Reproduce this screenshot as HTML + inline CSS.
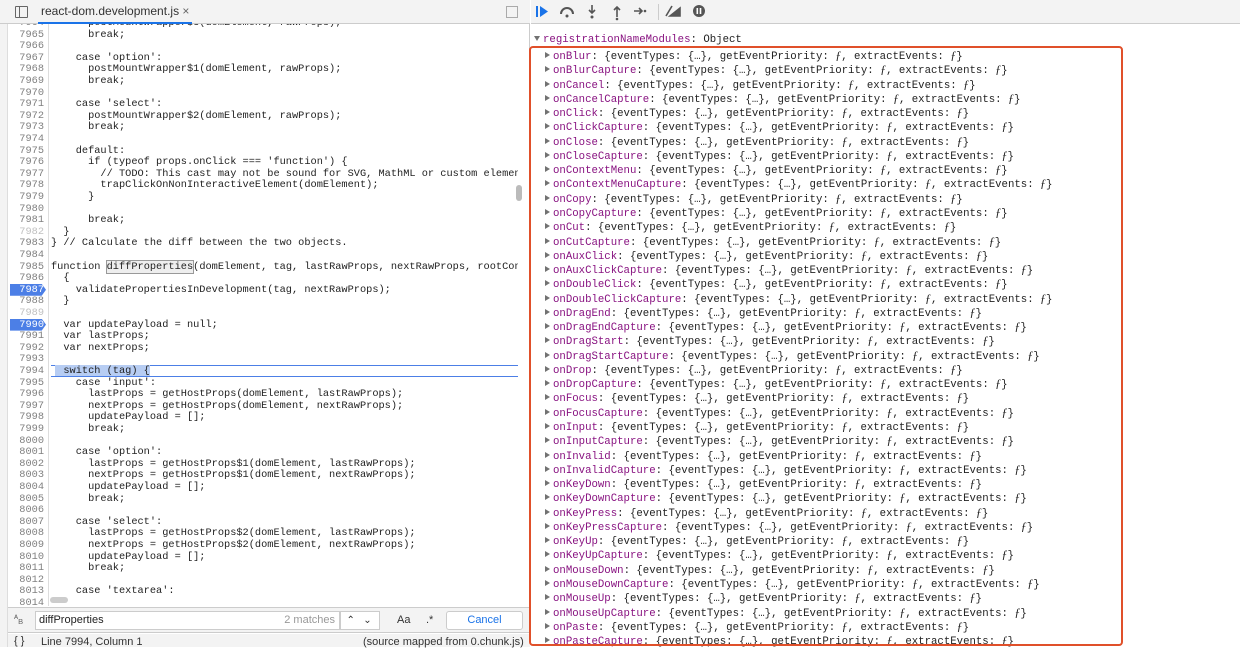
<!DOCTYPE html>
<html><head><meta charset="utf-8"><style>
*{margin:0;padding:0;box-sizing:border-box}
body{width:1240px;height:647px;overflow:hidden;background:#fff;font-family:"Liberation Sans",sans-serif;position:relative}
.mono{font-family:"Liberation Mono","DejaVu Sans Mono",monospace}
#left{position:absolute;left:0;top:0;width:530px;height:647px;background:#fff;border-right:1px solid #ccc}
#nav{position:absolute;left:0;top:24px;width:8px;height:623px;background:#f3f3f3;border-right:1px solid #ddd}
#tabbar{position:absolute;left:0;top:0;width:530px;height:24px;background:#f3f3f3;border-bottom:1px solid #ccc}
#tab{position:absolute;left:38px;top:0;height:24px;line-height:23px;font-size:12px;color:#333;padding:0 3px;border-bottom:2px solid #1a73e8}
#code{position:absolute;left:8px;top:24px;width:510px;height:582px;overflow:hidden}
.ln{position:absolute;left:0;width:38px;text-align:right;font-size:10.3px;color:#808080;padding-right:2px}
.gut{position:absolute;left:40px;top:0;width:1px;height:600px;background:#ddd}
.cl{position:absolute;left:43px;font-size:10.3px;color:#222;white-space:pre}
.bp{background:#4c7fe6;color:#fff;left:2px;width:36px;clip-path:polygon(0 0,88% 0,100% 50%,88% 100%,0 100%)}
#search{position:absolute;left:8px;top:607px;width:522px;height:26px;background:#f3f3f3;border-top:1px solid #ccc;border-bottom:1px solid #ccc}
#status{position:absolute;left:8px;top:634px;width:522px;height:13px;background:#f3f3f3;font-size:11px;color:#333}
#right{position:absolute;left:531px;top:0;width:709px;height:647px}
#rtool{position:absolute;left:0;top:0;width:709px;height:24px;background:#f3f3f3;border-bottom:1px solid #ccc}
.rr{position:absolute;left:14px;font-size:10.7px;white-space:pre;color:#222;line-height:14px}
.rr .k{color:#881280}
.rr i{font-family:"Liberation Serif",serif;font-size:12px}
.tri{display:inline-block;width:0;height:0;border-left:5px solid #727272;border-top:3px solid transparent;border-bottom:3px solid transparent;margin-right:3px;vertical-align:1px}
#box{position:absolute;left:529px;top:46px;width:594px;height:600px;border:2px solid #e0502a;border-radius:4px}
</style></head><body>
<div id="left">
<div id="tabbar">
<div style="position:absolute;left:15px;top:6px;width:13px;height:12px;border:1px solid #666;border-radius:1px"><div style="position:absolute;left:3px;top:0;width:1px;height:10px;background:#666"></div></div>
<div id="tab">react-dom.development.js <span style="color:#666">×</span></div>
<div style="position:absolute;left:506px;top:6px;width:12px;height:12px;border:1px solid #aaa"></div>
</div>
<div id="nav"></div>
<div id="code" class="mono"></div>
<div style="position:absolute;left:516px;top:185px;width:6px;height:16px;background:#bbb;border-radius:3px"></div>
<div style="position:absolute;left:50px;top:597px;width:18px;height:6px;background:#ccc;border-radius:3px"></div>
<div id="search">
<span style="position:absolute;left:6px;top:5px;font-size:9px;color:#666">ᴬ<sub>B</sub></span>
<div style="position:absolute;left:27px;top:3px;width:305px;height:19px;background:#fff;border:1px solid #ccc;font-size:11px;line-height:17px;padding-left:3px;color:#222">diffProperties<span style="position:absolute;right:4px;color:#999">2 matches</span></div>
<div style="position:absolute;left:332px;top:3px;width:40px;height:19px;background:#fff;border:1px solid #ccc;font-size:10px;line-height:17px;color:#333">&nbsp;&nbsp;⌃&nbsp;&nbsp;&nbsp;⌄</div>
<span style="position:absolute;left:389px;top:6px;font-size:11px;color:#333">Aa</span>
<span style="position:absolute;left:418px;top:6px;font-size:11px;color:#333">.*</span>
<div style="position:absolute;left:438px;top:3px;width:77px;height:19px;background:#fff;border:1px solid #ccc;border-radius:3px;font-size:11px;line-height:17px;text-align:center;color:#1a73e8">Cancel</div>
</div>
<div id="status"><span style="position:absolute;left:6px;top:1px">{ }</span><span style="position:absolute;left:33px;top:2px">Line 7994, Column 1</span><span style="position:absolute;left:355px;top:2px">(source mapped from 0.chunk.js)</span></div>
</div>
<div id="right">
<div id="rtool">
<svg width="200" height="24" style="position:absolute;left:0;top:0">
<rect x="5" y="6" width="2" height="11" fill="#1a73e8"/><path d="M9 6 L17 11.5 L9 17Z" fill="#1a73e8"/>
<path d="M30 14 A6 6 0 0 1 42 14" stroke="#555" stroke-width="2" fill="none"/><circle cx="36" cy="16" r="1.5" fill="#555"/>
<path d="M61 5 V13 M58 10 L61 13 L64 10" stroke="#555" stroke-width="1.6" fill="none"/><circle cx="61" cy="17" r="1.5" fill="#555"/>
<path d="M86 17 V8 M83 10 L86 7 L89 10" stroke="#555" stroke-width="1.6" fill="none"/><circle cx="86" cy="19" r="1.3" fill="#555"/>
<path d="M103 11 H111 M108 8 L111 11 L108 14" stroke="#555" stroke-width="1.6" fill="none"/><circle cx="114" cy="11" r="1.3" fill="#555"/>
<rect x="127" y="4" width="1" height="16" fill="#ccc"/>
<path d="M135 16 L141 6 M139 16 L149 8 L149 16Z" stroke="#555" stroke-width="1.6" fill="#555"/>
<circle cx="168" cy="11" r="6" fill="#555"/><rect x="165.5" y="8" width="1.6" height="6" fill="#fff"/><rect x="168.7" y="8" width="1.6" height="6" fill="#fff"/>
</svg>
</div>
<div class="rr mono" style="left:3px;top:33px"><span class="tri" style="border-left:3px solid transparent;border-right:3px solid transparent;border-top:5px solid #727272;border-bottom:0"></span><span class="k">registrationNameModules</span>: Object</div>
<div id="rows"></div>
</div>
<div id="box"></div>
<script>
var L=[
[7964,"      postMountWrapper$3(domElement, rawProps);"],
[7965,"      break;"],[7966,""],[7967,"    case 'option':"],[7968,"      postMountWrapper$1(domElement, rawProps);"],[7969,"      break;"],[7970,""],
[7971,"    case 'select':"],[7972,"      postMountWrapper$2(domElement, rawProps);"],[7973,"      break;"],[7974,""],[7975,"    default:"],
[7976,"      if (typeof props.onClick === 'function') {"],[7977,"        // TODO: This cast may not be sound for SVG, MathML or custom elements."],
[7978,"        trapClickOnNonInteractiveElement(domElement);"],[7979,"      }"],[7980,""],[7981,"      break;"],[7982,"  }"],
[7983,"} // Calculate the diff between the two objects."],[7984,""],
[7985,"function diffProperties(domElement, tag, lastRawProps, nextRawProps, rootContainerElement)"],
[7986,"  {"],[7987,"    validatePropertiesInDevelopment(tag, nextRawProps);"],[7988,"  }"],[7989,""],
[7990,"  var updatePayload = null;"],[7991,"  var lastProps;"],[7992,"  var nextProps;"],[7993,""],
[7994,"  switch (tag) {"],[7995,"    case 'input':"],[7996,"      lastProps = getHostProps(domElement, lastRawProps);"],
[7997,"      nextProps = getHostProps(domElement, nextRawProps);"],[7998,"      updatePayload = [];"],[7999,"      break;"],[8000,""],
[8001,"    case 'option':"],[8002,"      lastProps = getHostProps$1(domElement, lastRawProps);"],[8003,"      nextProps = getHostProps$1(domElement, nextRawProps);"],
[8004,"      updatePayload = [];"],[8005,"      break;"],[8006,""],[8007,"    case 'select':"],
[8008,"      lastProps = getHostProps$2(domElement, lastRawProps);"],[8009,"      nextProps = getHostProps$2(domElement, nextRawProps);"],
[8010,"      updatePayload = [];"],[8011,"      break;"],[8012,""],[8013,"    case 'textarea':"],[8014,""]];
var h='<div class="gut"></div>';var lh=11.6;
L.forEach(function(a,i){var t=-7+i*lh;var n=a[0];var c=a[1];
if(n==7994)h+='<div style="position:absolute;left:43px;top:'+(t-0.5)+'px;width:467px;height:12px;border-top:1px solid #4c7fe6;border-bottom:1px solid #4c7fe6"></div><div style="position:absolute;left:47px;top:'+t+'px;width:95px;height:11px;background:#b7cdf3"></div>';
var bp=(n==7987||n==7990);var col=(n==7982||n==7989)?'color:#c0c0c0;':'';
h+='<div class="ln'+(bp?' bp':'')+'" style="top:'+t+'px;'+col+'">'+n+'</div>';
c=c.replace(/&/g,'&amp;').replace(/</g,'&lt;');
if(n==7985)c=c.replace('diffProperties','<span style="outline:1px solid #999;background:#eee">diffProperties</span>');
h+='<div class="cl" style="top:'+t+'px">'+c+'</div>';});
document.getElementById('code').innerHTML=h;
var N=["Blur","Cancel","Click","Close","ContextMenu","Copy","Cut","AuxClick","DoubleClick","DragEnd","DragStart","Drop","Focus","Input","Invalid","KeyDown","KeyPress","KeyUp","MouseDown","MouseUp","Paste"];
var r='';var k=0;
N.forEach(function(n){["","Capture"].forEach(function(s){var t=48+k*14.27;
r+='<div class="rr mono" style="top:'+t+'px"><span class="tri"></span><span class="k">on'+n+s+'</span>: {eventTypes: {…}, getEventPriority: <i>ƒ</i>, extractEvents: <i>ƒ</i>}</div>';k++;});});
document.getElementById('rows').innerHTML=r;
</script>
</body></html>
